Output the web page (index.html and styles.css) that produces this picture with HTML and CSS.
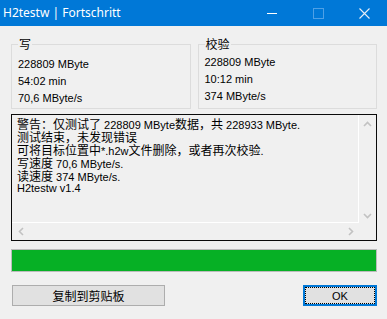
FILE: index.html
```html
<!DOCTYPE html>
<html>
<head>
<meta charset="utf-8">
<link rel="stylesheet" href="styles.css">
</head>
<body>
<div class="window">
  <div class="titlebar">
    <span class="title">H2testw | Fortschritt</span>
    <div class="ctrls">
      <span class="ctrl"><svg width="10" height="10" viewBox="0 0 10 10"><line x1="0" y1="5.5" x2="10" y2="5.5" stroke="#fff" stroke-width="1"/></svg></span>
      <span class="ctrl"><svg width="11" height="11" viewBox="0 0 11 11"><rect x="0.5" y="0.5" width="10" height="10" fill="none" stroke="#4ea0e6" stroke-width="1"/></svg></span>
      <span class="ctrl"><svg width="11" height="11" viewBox="0 0 11 11"><path d="M0.5 0.5 L10.5 10.5 M10.5 0.5 L0.5 10.5" stroke="#e8eef6" stroke-width="1.1"/></svg></span>
    </div>
  </div>
  <div class="main">
    <div class="groups">
      <fieldset class="group g1">
        <legend class="zh">写</legend>
        <div class="line">228809 MByte</div>
        <div class="line">54:02 min</div>
        <div class="line">70,6 MByte/s</div>
      </fieldset>
      <fieldset class="group g2">
        <legend class="zh">校验</legend>
        <div class="line">228809 MByte</div>
        <div class="line">10:12 min</div>
        <div class="line">374 MByte/s</div>
      </fieldset>
    </div>
    <div class="log">
      <div class="log-text">
        <div class="lline"><span class="zh">警告：仅测试了</span> 228809 MByte<span class="zh">数据，共</span> 228933 MByte.</div>
        <div class="lline"><span class="zh">测试结束，未发现错误</span></div>
        <div class="lline"><span class="zh">可将目标位置中</span>*.h2w<span class="zh">文件删除，或者再次校验</span>.</div>
        <div class="lline"><span class="zh">写速度</span> 70,6 MByte/s.</div>
        <div class="lline"><span class="zh">读速度</span> 374 MByte/s.</div>
        <div class="lline">H2testw v1.4</div>
      </div>
      <div class="vscroll">
        <svg class="arr" width="9" height="6" viewBox="0 0 9 6"><polyline points="1,5 4.5,1.5 8,5" fill="none" stroke="#c2c2c2" stroke-width="1.6"/></svg>
        <svg class="arr" width="9" height="6" viewBox="0 0 9 6"><polyline points="1,1 4.5,4.5 8,1" fill="none" stroke="#c2c2c2" stroke-width="1.6"/></svg>
      </div>
      <div class="hscroll">
        <svg class="arr" width="6" height="9" viewBox="0 0 6 9"><polyline points="5,1 1.5,4.5 5,8" fill="none" stroke="#c2c2c2" stroke-width="1.6"/></svg>
        <svg class="arr" width="6" height="9" viewBox="0 0 6 9"><polyline points="1,1 4.5,4.5 1,8" fill="none" stroke="#c2c2c2" stroke-width="1.6"/></svg>
      </div>
      <div class="corner"></div>
    </div>
    <div class="progress"><div class="fill"></div></div>
    <div class="buttons">
      <button class="btn copy zh">复制到剪贴板</button>
      <button class="btn ok"><span class="focus">OK</span></button>
    </div>
  </div>
</div>
</body>
</html>
```
FILE: styles.css
```css
html, body {
  margin: 0;
  padding: 0;
}
body {
  width: 387px;
  height: 319px;
  background: #f0f0f0;
  font-family: "Liberation Sans", Arial, sans-serif;
  font-size: 11px;
  color: #000;
  overflow: hidden;
}
.zh {
  font-family: "Noto Sans CJK SC", "Noto Sans", sans-serif;
  font-size: 12px;
}
.titlebar {
  height: 26px;
  background: #0078d7;
  display: flex;
  align-items: center;
  justify-content: space-between;
}
.title {
  font-family: "Noto Sans", "Liberation Sans", sans-serif;
  font-size: 12px;
  color: #fff;
  padding-left: 3px;
  line-height: 26px;
}
.ctrls {
  display: flex;
  height: 26px;
}
.ctrl {
  width: 46px;
  display: flex;
  align-items: center;
  justify-content: center;
}
.main {
  padding: 12px 10px 0 11px;
}
.groups {
  display: flex;
  gap: 7px;
}
.group {
  flex: 1;
  margin: 0;
  border: 1px solid #dcdcdc;
  padding: 6px 0 1px 6px;
  min-width: 0;
}
.group.g2 {
  padding-top: 4px;
  padding-bottom: 3px;
}
.group legend {
  padding: 0 1px;
  line-height: 12px;
  height: 12px;
}
.line {
  line-height: 17px;
  height: 17px;
  white-space: nowrap;
}
.log {
  margin-top: 5px;
  border: 1px solid #0a0a0a;
  height: 125px;
  display: grid;
  grid-template-columns: 1fr 17px;
  grid-template-rows: 1fr 17px;
}
.log-text {
  border-right: 1px solid #fff;
  border-bottom: 1px solid #fff;
  padding: 2px 0 0 5px;
  overflow: hidden;
}
.lline {
  height: 13px;
  line-height: 13px;
  white-space: nowrap;
}
.lline .zh {
  display: inline-block;
  height: 13px;
  line-height: 13px;
}
.vscroll {
  display: flex;
  flex-direction: column;
  justify-content: space-between;
  align-items: center;
  padding: 6px 0 4px 0;
}
.hscroll {
  display: flex;
  justify-content: space-between;
  align-items: center;
  padding: 0 5px 0 6px;
}
.progress {
  margin-top: 8px;
  height: 21px;
  border: 1px solid #bcbcbc;
  background: #e6e6e6;
}
.fill {
  height: 100%;
  width: 100%;
  background: #06b025;
}
.buttons {
  margin-top: 13px;
  display: flex;
  justify-content: space-between;
  padding-left: 1px;
}
.btn {
  height: 21px;
  margin: 0;
  padding: 0;
  background: #e1e1e1;
  color: #000;
  border: 1px solid #adadad;
  display: flex;
  align-items: center;
  justify-content: center;
}
.copy {
  width: 153px;
  line-height: 19px;
}
.ok {
  width: 74px;
  border: 2px solid #0078d7;
  font-family: "Liberation Sans", Arial, sans-serif;
  font-size: 11px;
}
.focus {
  display: flex;
  align-items: center;
  justify-content: center;
  width: 100%;
  height: 100%;
  box-sizing: border-box;
  border: 1px dotted #000;
}
```
